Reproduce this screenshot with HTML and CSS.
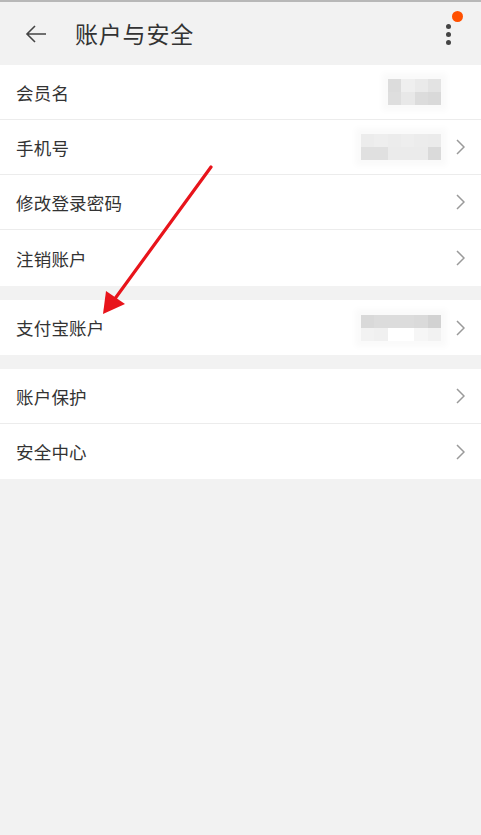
FILE: index.html
```html
<!DOCTYPE html>
<html lang="zh">
<head>
<meta charset="utf-8">
<link rel="stylesheet" href="styles.css">
</head>
<body>
<div class="page">
  <header class="topbar">
    <svg class="back" width="22" height="20" viewBox="0 0 22 20"><path d="M21 10H2M10 2L2 10l8 8" fill="none" stroke="#444" stroke-width="1.6"/></svg>
    <h1 class="title">账户与安全</h1>
    <div class="more">
      <span class="dot"></span><span class="dot"></span><span class="dot"></span>
      <span class="badge"></span>
    </div>
  </header>

  <section class="group first">
    <div class="row">
      <span class="label">会员名</span>
      <div class="blur b4 r-name">
        <i style="background:#dcdcdc"></i><i style="background:#efefef"></i><i style="background:#eaeaea"></i><i style="background:#e3e3e3"></i>
        <i style="background:#dedede"></i><i style="background:#e8e8e8"></i><i style="background:#dcdcdc"></i><i style="background:#d9d9d9"></i>
      </div>
      <span class="chev-space"></span>
    </div>
    <div class="row">
      <span class="label">手机号</span>
      <div class="blur b6">
        <i style="background:#ececec"></i><i style="background:#eeeeee"></i><i style="background:#ececec"></i><i style="background:#eeeeee"></i><i style="background:#ececec"></i><i style="background:#ebebeb"></i>
        <i style="background:#e0e0e0"></i><i style="background:#e0e0e0"></i><i style="background:#ebebeb"></i><i style="background:#ebebeb"></i><i style="background:#ebebeb"></i><i style="background:#dadada"></i>
      </div>
      <svg class="chev" width="9" height="16" viewBox="0 0 9 16"><path d="M1 1l7 7-7 7" fill="none" stroke="#9a9a9a" stroke-width="1.5"/></svg>
    </div>
    <div class="row">
      <span class="label">修改登录密码</span>
      <svg class="chev" width="9" height="16" viewBox="0 0 9 16"><path d="M1 1l7 7-7 7" fill="none" stroke="#9a9a9a" stroke-width="1.5"/></svg>
    </div>
    <div class="row">
      <span class="label">注销账户</span>
      <svg class="chev" width="9" height="16" viewBox="0 0 9 16"><path d="M1 1l7 7-7 7" fill="none" stroke="#9a9a9a" stroke-width="1.5"/></svg>
    </div>
  </section>

  <section class="group">
    <div class="row">
      <span class="label">支付宝账户</span>
      <div class="blur b6 r-pay">
        <i style="background:#d9d9d9"></i><i style="background:#dcdcdc"></i><i style="background:#dcdcdc"></i><i style="background:#dcdcdc"></i><i style="background:#dadada"></i><i style="background:#d2d2d2"></i>
        <i style="background:#f2f2f2"></i><i style="background:#f0f0f0"></i><i style="background:#ffffff"></i><i style="background:#ffffff"></i><i style="background:#f6f6f6"></i><i style="background:#f2f2f2"></i>
      </div>
      <svg class="chev" width="9" height="16" viewBox="0 0 9 16"><path d="M1 1l7 7-7 7" fill="none" stroke="#9a9a9a" stroke-width="1.5"/></svg>
    </div>
  </section>

  <section class="group">
    <div class="row">
      <span class="label">账户保护</span>
      <svg class="chev" width="9" height="16" viewBox="0 0 9 16"><path d="M1 1l7 7-7 7" fill="none" stroke="#9a9a9a" stroke-width="1.5"/></svg>
    </div>
    <div class="row">
      <span class="label">安全中心</span>
      <svg class="chev" width="9" height="16" viewBox="0 0 9 16"><path d="M1 1l7 7-7 7" fill="none" stroke="#9a9a9a" stroke-width="1.5"/></svg>
    </div>
  </section>

  <svg class="annot" width="481" height="835" viewBox="0 0 481 835">
    <line x1="211" y1="167" x2="114" y2="300" stroke="#e8141b" stroke-width="3.2" stroke-linecap="round"/>
    <polygon points="103,314 106,291 125,304" fill="#e8141b"/>
  </svg>
</div>
</body>
</html>
```

FILE: styles.css
```css
html, body {
  margin: 0;
  padding: 0;
  background: #f2f2f2;
}
body {
  font-family: "Noto Sans CJK SC", "Noto Sans", sans-serif;
  color: #333;
}
.page {
  position: relative;
  width: 481px;
  min-height: 835px;
  background: #f2f2f2;
  border-top: 2px solid #b8b8b8;
  box-sizing: border-box;
}
.topbar {
  height: 63px;
  display: flex;
  align-items: center;
  background: #f2f2f2;
  padding-left: 25px;
}
.back {
  display: block;
}
.title {
  margin: 0 0 0 28px;
  font-size: 23px;
  font-weight: 400;
  color: #333;
  line-height: 1;
  letter-spacing: 0.8px;
}
.more {
  position: relative;
  margin-left: auto;
  margin-right: 30px;
  display: flex;
  flex-direction: column;
  gap: 3px;
  padding-top: 1px;
}
.dot {
  width: 5px;
  height: 5px;
  border-radius: 50%;
  background: #444;
}
.badge {
  position: absolute;
  left: 6px;
  top: -12px;
  width: 11px;
  height: 11px;
  border-radius: 50%;
  background: #ff5000;
}
.group {
  background: #fff;
  margin-bottom: 14px;
}
.row {
  height: 54px;
  display: flex;
  align-items: center;
  padding: 0 16px 0 16px;
  border-bottom: 1px solid #ececec;
}
.group .row:last-child {
  border-bottom: none;
  height: 55px;
}
.group.first .row:last-child {
  height: 56px;
}
.label {
  font-size: 17.5px;
  color: #333;
  letter-spacing: 0.2px;
}
.blur {
  margin-left: auto;
  display: grid;
  grid-auto-rows: 13px;
  margin-right: 15px;
  box-shadow: 0 0 6px 6px #fafafa;
}
.blur i {
  display: block;
}
.b4 {
  grid-template-columns: repeat(4, 13.25px);
}
.b6 {
  grid-template-columns: repeat(6, 13.33px);
}
.chev-space {
  width: 9px;
}
.chev {
  display: block;
  margin-left: auto;
}
.blur + .chev {
  margin-left: 0;
}
.annot {
  position: absolute;
  left: 0;
  top: -2px;
  pointer-events: none;
}
```
